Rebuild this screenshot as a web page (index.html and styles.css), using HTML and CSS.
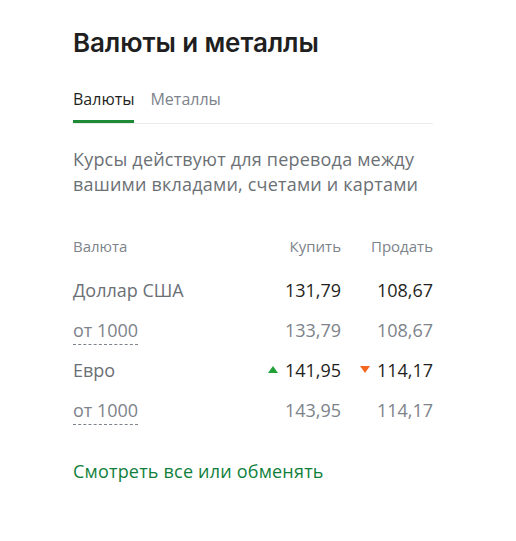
FILE: index.html
```html
<!DOCTYPE html>
<html lang="ru">
<head>
<meta charset="utf-8">
<title>Валюты и металлы</title>
<link rel="stylesheet" href="styles.css">
</head>
<body>
<div class="card">
  <h1 class="title">Валюты и металлы</h1>
  <div class="tabs">
    <span class="tab tab-active">Валюты</span>
    <span class="tab">Металлы</span>
  </div>
  <p class="desc">Курсы действуют для перевода между вашими вкладами, счетами и картами</p>
  <div class="table">
    <div class="row head">
      <span class="name">Валюта</span>
      <span class="val">Купить</span>
      <span class="val">Продать</span>
    </div>
    <div class="row main">
      <span class="name">Доллар США</span>
      <span class="val">131,79</span>
      <span class="val">108,67</span>
    </div>
    <div class="row sub">
      <span class="name"><span class="dotted">от 1000</span></span>
      <span class="val">133,79</span>
      <span class="val">108,67</span>
    </div>
    <div class="row main">
      <span class="name">Евро</span>
      <span class="val"><span class="tri up"></span>141,95</span>
      <span class="val"><span class="tri down"></span>114,17</span>
    </div>
    <div class="row sub">
      <span class="name"><span class="dotted">от 1000</span></span>
      <span class="val">143,95</span>
      <span class="val">114,17</span>
    </div>
  </div>
  <a class="link" href="#">Смотреть все или обменять</a>
</div>
</body>
</html>
```
FILE: styles.css
```css
html, body {
  margin: 0;
  padding: 0;
  background: #ffffff;
}
body {
  font-family: "Open Sans", "Noto Sans", sans-serif;
  color: #1f1f22;
}
.card {
  width: 360px;
  margin-left: 73px;
  padding-top: 26px;
}
.title {
  margin: 0;
  font-family: "Inter", "Noto Sans", sans-serif;
  font-weight: 600;
  font-size: 26px;
  line-height: 34px;
  letter-spacing: -0.1px;
  color: #1f1f22;
}
.tabs {
  display: flex;
  gap: 16px;
  margin-top: 29px;
  border-bottom: 1px solid #e9ebed;
}
.tab {
  font-size: 16px;
  line-height: 20px;
  padding-bottom: 11px;
  color: #7d838a;
  border-bottom: 3px solid transparent;
}
.tab-active {
  color: #1f1f22;
  border-bottom-color: #1e8a35;
}
.desc {
  margin: 23px 0 0;
  font-size: 18px;
  line-height: 25px;
  letter-spacing: 0.2px;
  color: #6b7075;
}
.table {
  margin-top: 38px;
}
.row {
  display: grid;
  grid-template-columns: 1fr 90px 92px;
  align-items: center;
  height: 40px;
}
.row .val {
  text-align: right;
}
.head {
  height: 22px;
  line-height: 22px;
  margin-bottom: 13px;
  font-size: 15px;
  color: #7d838a;
}
.main, .sub {
  font-size: 18px;
  line-height: 40px;
}
.main .name {
  color: #6b7075;
}
.main .val {
  color: #1f1f22;
}
.sub .name, .sub .val {
  color: #7d838a;
}
.dotted {
  display: inline-block;
  line-height: 20px;
  border-bottom: 1px dashed #7d838a;
  padding-bottom: 4px;
}
.tri {
  display: inline-block;
  width: 0;
  height: 0;
  margin-right: 7px;
  vertical-align: 4px;
  border-left: 5px solid transparent;
  border-right: 5px solid transparent;
}
.tri.up {
  border-bottom: 7px solid #21a038;
}
.tri.down {
  border-top: 7px solid #f5661e;
}
.link {
  display: block;
  margin-top: 29px;
  font-size: 18px;
  line-height: 24px;
  letter-spacing: 0.2px;
  color: #107f3c;
  text-decoration: none;
}
```
